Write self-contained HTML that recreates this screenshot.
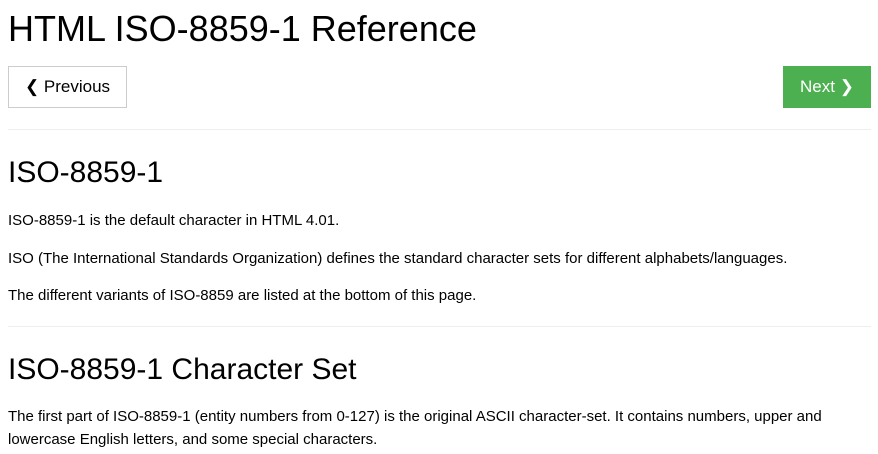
<!DOCTYPE html>
<html><head><meta charset="utf-8"><style>
body{margin:0;font-family:"Liberation Sans",Arial,sans-serif;color:#000;background:#fff;width:878px;overflow:hidden}
h1{font-size:36px;font-weight:normal;margin:0;position:absolute;top:8px;left:8px;line-height:42px}
.btn{position:absolute;top:66px;height:42px;box-sizing:border-box;font-size:17px;line-height:40px;white-space:nowrap;text-align:center;padding:0}
.prev{left:8px;width:119px;border:1px solid #ccc;color:#000}
.next{left:783px;width:88px;background:#4CAF50;color:#fff;border:1px solid #4CAF50}
hr{position:absolute;left:8px;width:863px;border:0;border-top:1px solid #eee;margin:0}
h2{position:absolute;left:8px;font-size:30px;font-weight:normal;margin:0;line-height:36px}
p{position:absolute;left:8px;margin:0;font-size:15px;line-height:23px;width:860px}
</style></head><body>
<h1>HTML ISO-8859-1 Reference</h1>
<div class="btn prev">❮ Previous</div>
<div class="btn next">Next ❯</div>
<hr style="top:129px">
<h2 style="top:155px">ISO-8859-1</h2>
<p style="top:209px">ISO-8859-1 is the default character in HTML 4.01.</p>
<p style="top:247px">ISO (The International Standards Organization) defines the standard character sets for different alphabets/languages.</p>
<p style="top:284px">The different variants of ISO-8859 are listed at the bottom of this page.</p>
<hr style="top:326px">
<h2 style="top:352px">ISO-8859-1 Character Set</h2>
<p style="top:405px">The first part of ISO-8859-1 (entity numbers from 0-127) is the original ASCII character-set. It contains numbers, upper and lowercase English letters, and some special characters.</p>
</body></html>
